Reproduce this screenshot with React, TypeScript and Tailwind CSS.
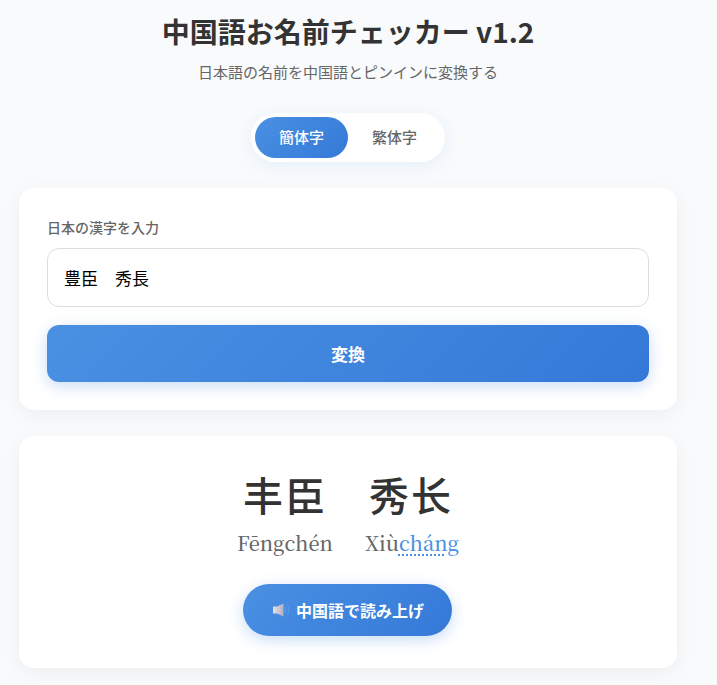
import React, { useState } from 'react';

const jpFont = "font-['Noto_Sans_CJK_JP','Noto_Sans',sans-serif]";

const blueGradient = 'bg-[linear-gradient(135deg,#4a90e2,#3579d8)]';

// the 🔉 glyph from the original page, drawn by hand
const SpeakerIcon = () => (
  <svg width="20" height="20" viewBox="0 0 20 20" className="shrink-0">
    <defs>
      <linearGradient id="spk" x1="0" y1="0" x2="1" y2="0">
        <stop offset="0" stopColor="#e4e2e8" />
        <stop offset="1" stopColor="#b4aec0" />
      </linearGradient>
    </defs>
    <path d="M3 6.500h4L13.500 3.500v13L7 13.500H3z" fill="url(#spk)" />
    <path d="M15 7.500a3.500 3.500 0 0 1 0 5" fill="none" stroke="#6db3f2" strokeWidth="1" strokeDasharray="1 .6" />
    <path d="M17 5.500a6.500 6.500 0 0 1 0 9" fill="none" stroke="#6db3f2" strokeWidth="1" strokeDasharray="1 .8" />
  </svg>
);

export default function App() {
  const [mode, setMode] = useState<'simplified' | 'traditional'>('simplified');
  const [name, setName] = useState('豊臣\u3000秀長');

  return (
    <div className={`min-h-[685px] w-full overflow-hidden bg-[#f8fafc] ${jpFont}`}>
      <div className="w-[696px] px-[19px]">
        {/* Header */}
        <h1 className="pt-[11px] text-center text-[28px] leading-[40px] font-bold text-[#333333]">
          中国語お名前チェッカー v1.2
        </h1>
        <p className="mt-[11px] text-center text-[15px] leading-[20px] text-[#666666]">
          日本語の名前を中国語とピンインに変換する
        </p>

        {/* Simplified / traditional switch */}
        <div className="mt-[31px] flex justify-center">
          <div className="flex rounded-[25px] bg-white p-[4px] shadow-[0_4px_15px_rgba(74,144,226,0.1)]">
            <button
              onClick={() => setMode('simplified')}
              className={`h-[41px] w-[93px] rounded-[21px] text-[15px] font-medium ${
                mode === 'simplified' ? `${blueGradient} text-white` : 'text-[#666666]'
              }`}
            >
              簡体字
            </button>
            <button
              onClick={() => setMode('traditional')}
              className={`h-[41px] w-[93px] rounded-[21px] text-[15px] font-medium ${
                mode === 'traditional' ? `${blueGradient} text-white` : 'text-[#666666]'
              }`}
            >
              繁体字
            </button>
          </div>
        </div>

        {/* Input card */}
        <div className="mt-[26px] rounded-[15px] bg-white px-[28px] pt-[27px] pb-[28px] shadow-[0_5px_20px_rgba(0,0,0,0.05)]">
          <label className="block text-[14px] leading-[24px] font-medium text-[#666666]">日本の漢字を入力</label>
          <input
            value={name}
            onChange={(e) => setName(e.target.value)}
            className={`mt-[9px] block h-[59px] w-full rounded-[12px] border border-[#dddddd] bg-white px-[16px] text-[17px] text-black outline-none ${jpFont}`}
          />
          <button className={`mt-[18px] block h-[57px] w-full rounded-[12px] text-[17px] font-bold text-white shadow-[0_4px_15px_rgba(74,144,226,0.3)] ${blueGradient}`}>
            変換
          </button>
        </div>

        {/* Result card */}
        <div className="mt-[26px] rounded-[15px] bg-white pt-[29px] pb-[32px] text-center shadow-[0_5px_20px_rgba(0,0,0,0.05)]">
          <div className="text-[40px] leading-[58px] font-medium tracking-[2px] text-[#333333]">丰臣　秀长</div>
          <div className="mt-[4px] flex justify-center gap-[32px] font-['Noto_Serif_CJK_JP','Noto_Serif','Liberation_Serif',serif] text-[20px] leading-[32px] font-medium text-[#666666]">
            <span>Fēngchén</span>
            <span>
              Xiù
              <span className="text-[#4a90e2] underline decoration-[#4a90e2] decoration-dotted decoration-2 underline-offset-[3px]">cháng</span>
            </span>
          </div>
          <div className="mt-[25px] flex justify-center">
            <button className={`flex h-[52px] w-[209px] -translate-x-px items-center justify-center gap-[6px] rounded-[26px] text-[16px] font-bold text-white shadow-[0_4px_15px_rgba(74,144,226,0.3)] ${blueGradient}`}>
              <SpeakerIcon />
              中国語で読み上げ
            </button>
          </div>
        </div>
      </div>
    </div>
  );
}
